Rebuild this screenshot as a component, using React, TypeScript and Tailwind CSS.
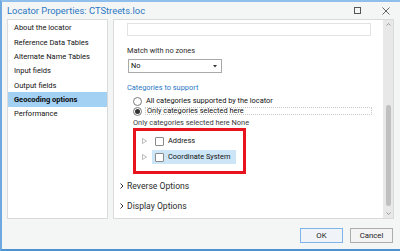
import React from 'react';

const navItems = [
  'About the locator',
  'Reference Data Tables',
  'Alternate Name Tables',
  'Input fields',
  'Output fields',
  'Geocoding options',
  'Performance',
];

const TreeArrow = () => (
  <svg width="5" height="6" viewBox="0 0 5 6" className="shrink-0">
    <path d="M0.5 0.5 L4.5 3 L0.5 5.5 Z" fill="none" stroke="#a8a8a8" strokeWidth="0.8" />
  </svg>
);

const Chevron = () => (
  <svg width="4" height="6" viewBox="0 0 4 6" className="shrink-0">
    <path d="M0.5 0.5 L3 3 L0.5 5.5" fill="none" stroke="#333" strokeWidth="1" />
  </svg>
);

const CheckBox = () => (
  <div className="w-[9px] h-[9px] border border-[#8a8a8a] bg-white rounded-[1px] shrink-0" />
);

const Radio = ({ checked }: { checked?: boolean }) => (
  <div className="w-[9px] h-[9px] rounded-full border border-[#7a7a7a] bg-white flex items-center justify-center shrink-0">
    {checked && <div className="w-[5px] h-[5px] rounded-full bg-[#333]" />}
  </div>
);

export default function App() {
  return (
    <div className="w-[400px] h-[251px] overflow-hidden bg-[#f4f5f5] border-l-2 border-t-2 border-b-2 border-l-[#6fa8de] border-t-[#8fbfea] border-b-[#4f92d2] flex flex-col font-['Roboto',sans-serif] text-[#111] whitespace-nowrap">
      {/* title bar */}
      <div className="h-[17px] flex items-center pl-[5px] pr-[10px] shrink-0">
        <span className="text-[9.4px] text-[#2a78c4] leading-none">Locator Properties: CTStreets.loc</span>
        <div className="ml-auto flex items-center gap-[21px]">
          <svg width="7" height="7" viewBox="0 0 7 7">
            <rect x="0.5" y="0.5" width="6" height="6" fill="none" stroke="#555" strokeWidth="1" />
          </svg>
          <svg width="8" height="8" viewBox="0 0 8 8">
            <path d="M0.5 0.5 L7.5 7.5 M7.5 0.5 L0.5 7.5" stroke="#555" strokeWidth="0.9" />
          </svg>
        </div>
      </div>

      {/* body */}
      <div className="flex gap-[5px] pl-[5px] h-[200px] shrink-0">
        <div className="w-[101px] h-full bg-white border border-[#dadada] pt-[1px]">
          {navItems.map((item) => (
            <div
              key={item}
              className={`h-[14.3px] flex items-center pl-[6px] text-[7.5px] leading-none ${
                item === 'Geocoding options' ? 'bg-[#a3d1f3] font-bold text-[#0a0a0a]' : 'text-[#111]'
              }`}
            >
              {item}
            </div>
          ))}
        </div>

        <div className="w-[281px] h-full bg-white border border-[#dadada] flex">
          <div className="flex-1 pl-[13px] text-[7.4px] leading-none">
            <div className="mt-[3px] w-[244px] h-[13px] border border-[#e3e3e3] bg-white" />
            <div className="mt-[9px] h-[12px] flex items-center text-[#2b2b2b]">Match with no zones</div>
            <div className="mt-[2px] ml-[1px] w-[94px] h-[14px] border border-[#a9a9a9] bg-white flex items-center pl-[2px] pr-[4px]">
              <span>No</span>
              <svg width="4" height="3" viewBox="0 0 4 3" className="ml-auto">
                <path d="M0 0 L4 0 L2 2.5 Z" fill="#333" />
              </svg>
            </div>
            <div className="mt-[9px] h-[12px] flex items-center text-[#2a78c4]">Categories to support</div>
            <div className="mt-[2px] ml-[6px] h-[10px] flex items-center gap-[4px]">
              <Radio />
              <span>All categories supported by the locator</span>
            </div>
            <div className="ml-[6px] h-[10px] flex items-center">
              <Radio checked />
              <div className="ml-[3px] w-[227px] h-[8px] border border-dotted border-[#c8c8c8] flex items-center pl-[1px]">
                Only categories selected here
              </div>
            </div>
            <div className="mt-[1px] ml-[6px] h-[11px] flex items-center text-[#3a3a3a]">
              Only categories selected here None
            </div>
            <div className="ml-[6px] w-[113px] h-[46px] border-[3px] border-[#e8131d] pt-[3px] flex flex-col gap-[2px]">
              <div className="h-[14px] flex items-center pl-[6px]">
                <TreeArrow />
                <div className="ml-[5px] w-[84px] h-full flex items-center pl-[3px]">
                  <CheckBox />
                  <span className="ml-[4px]">Address</span>
                </div>
              </div>
              <div className="h-[14px] flex items-center pl-[6px]">
                <TreeArrow />
                <div className="ml-[5px] w-[84px] h-full flex items-center pl-[3px] bg-[#cde6f7]">
                  <CheckBox />
                  <span className="ml-[4px]">Coordinate System</span>
                </div>
              </div>
            </div>
            <div className="mt-[5px] -ml-[7px] h-[14px] flex items-center gap-[3px] text-[8.6px] text-[#2b2b2b]">
              <Chevron />
              <span>Reverse Options</span>
            </div>
            <div className="mt-[6px] -ml-[7px] h-[14px] flex items-center gap-[3px] text-[8.6px] text-[#2b2b2b]">
              <Chevron />
              <span>Display Options</span>
            </div>
          </div>
          <div className="w-[10px] h-full bg-[#e8e8e8] flex flex-col items-center py-[3px]">
            <svg width="5" height="3" viewBox="0 0 5 3">
              <path d="M0.5 2.5 L2.5 0.5 L4.5 2.5" fill="none" stroke="#888" strokeWidth="0.8" />
            </svg>
            <div className="mt-[79px] w-[5px] h-[101px] rounded-[3px] bg-[#c0c0c0]" />
            <svg width="5" height="3" viewBox="0 0 5 3" className="mt-auto">
              <path d="M0.5 0.5 L2.5 2.5 L4.5 0.5" fill="none" stroke="#888" strokeWidth="0.8" />
            </svg>
          </div>
        </div>
      </div>

      {/* footer */}
      <div className="flex-1 flex justify-end items-start pt-[9px] pr-[7px] gap-[7px] text-[7.8px]">
        <button className="w-[43px] h-[15px] border border-[#7eb4ea] bg-[#f0f4f8] flex items-center justify-center text-[#222]">
          OK
        </button>
        <button className="w-[43px] h-[15px] border border-[#adadad] bg-[#f4f4f4] flex items-center justify-center text-[#222]">
          Cancel
        </button>
      </div>
    </div>
  );
}
